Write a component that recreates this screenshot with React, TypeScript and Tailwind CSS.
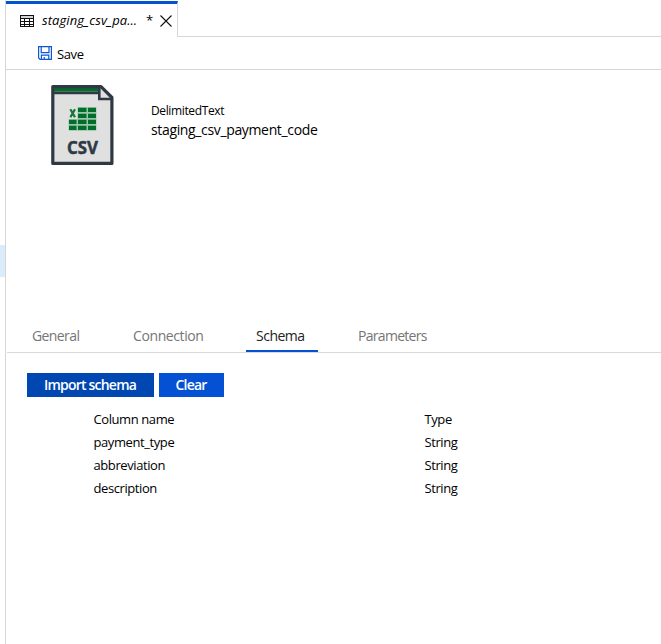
const rows = [
  { name: 'Column name', type: 'Type' },
  { name: 'payment_type', type: 'String' },
  { name: 'abbreviation', type: 'String' },
  { name: 'description', type: 'String' },
];

function TableIcon() {
  return (
    <svg width="14" height="12" viewBox="0 0 14 12" fill="none" stroke="#111111" shapeRendering="crispEdges">
      <path d="M1 1h12v2H1z" fill="#d4d4d4" stroke="none" />
      <path d="M.5 .5h13v11H.5zM0 3.5h14M0 6.5h14M0 9.5h14M4.5 4v8M9.5 4v8" />
    </svg>
  );
}

function SaveIcon() {
  return (
    <svg width="14" height="14" viewBox="0 0 14 14" fill="none" stroke="#0b57d6" strokeWidth="1.2">
      <path d="M.6 .6h12.8v12.8H2l-1.4-1.4zM3.2 .6v6h7.8v-6M3.4 13.4V9.2h7.4v4.2M6.2 11v2.4" />
    </svg>
  );
}

function CsvIcon() {
  return (
    <svg width="64" height="82" viewBox="0 0 64 82" className="block">
      <path d="M2 2H50L61 13V78H2z" fill="#e0e0e0" />
      <path d="M3 2H48V6.5H3z" fill="#036d2c" />
      <path d="M3 6.4H48V9.3H3z" fill="#2f3944" />
      <path d="M48.3 2V14H60" fill="#e0e0e0" stroke="#2f3944" strokeWidth="2.6" />
      <path d="M1.8 1.6H50L60.9 12.5V78.4H1.8z" fill="none" stroke="#2f3944" strokeWidth="3.2" strokeLinejoin="round" />
      <path d="M26.5 22.3H45.5V45.7H17.5V34.2H26.5z" fill="#9bc5a8" />
      <g fill="#036d2c">
        <path d="M27 22.8h8.5v4.2h-8.5zM37 22.8h8v4.2h-8zM27 28.7h8.5v4.2h-8.5zM37 28.7h8v4.2h-8z" />
        <path d="M18 34.8h7.5V39H18zM27 34.8h8.5V39H27zM37 34.8h8V39h-8zM18 40.8h7.5v4.3H18zM27 40.8h8.5v4.3H27zM37 40.8h8v4.3h-8z" />
      </g>
      <path d="M19.4 24.2l4.6 8M24 24.2l-4.6 8" stroke="#187838" strokeWidth="2.3" />
      <text x="31.5" y="69" textAnchor="middle" fontSize="17.2" fontWeight="700" textLength="31" lengthAdjust="spacingAndGlyphs" fill="#2f3944" stroke="#2f3944" strokeWidth=".5" fontFamily="Open Sans">
        CSV
      </text>
    </svg>
  );
}

export default function App() {
  return (
    <div className="flex h-[644px] w-[661px] overflow-hidden bg-white font-['Open_Sans','Noto_Sans',sans-serif] text-[13px] whitespace-nowrap text-black">
      <div className="w-[5px] shrink-0 pt-[245px]">
        <div className="h-8 bg-[#daebfc]" />
      </div>
      <div className="w-px shrink-0 bg-[#d6d6d6]" />
      <main className="flex min-w-0 flex-1 flex-col">
        <div className="flex h-[37px] shrink-0 pt-px">
          <div className="flex w-[172px] items-center border-t-3 border-r border-t-[#0452d3] border-r-[#d6d6d6] pl-[14px]">
            <TableIcon />
            <span className="ml-2 w-[95px] text-[13px] tracking-[0.08px] italic">staging_csv_pa...</span>
            <span className="ml-[9px] w-[7px]">*</span>
            <svg width="12" height="12" viewBox="0 0 12 12" className="ml-[7px] shrink-0" stroke="#111" strokeWidth="1.1">
              <path d="M.5 .5l11 11M11.5 .5l-11 11" />
            </svg>
          </div>
          <div className="flex-1 border-b border-[#d6d6d6]" />
        </div>
        <div className="flex h-[33px] shrink-0 items-center border-b border-[#d6d6d6] pl-8">
          <SaveIcon />
          <span className="ml-[5px] pt-[3px] tracking-[-0.4px]">Save</span>
        </div>
        <section className="flex h-[253px] shrink-0 pt-[15px] pl-[45px]">
          <CsvIcon />
          <div className="pt-[17px] pl-9">
            <div className="h-[18px] text-xs leading-[18px] tracking-[-0.37px]">DelimitedText</div>
            <div className="text-sm leading-5 tracking-[-0.35px]">staging_csv_payment_code</div>
          </div>
        </section>
        <nav className="ml-px flex h-[30px] shrink-0 border-b border-[#d9d9d9] text-sm leading-[26px] text-[#757575]">
          <span className="w-[101px] pl-[25px] tracking-[-0.6px]">General</span>
          <span className="w-[138px] pl-[25px] tracking-[-0.4px]">Connection</span>
          <span className="h-[29px] w-[72px] border-b-2 border-[#0452d3] pl-[10px] tracking-[-0.5px] text-[#222]">Schema</span>
          <span className="pl-[40px] tracking-[-0.7px]">Parameters</span>
        </nav>
        <div className="flex gap-[5px] pt-5 pl-[21px] text-sm leading-6 font-semibold tracking-[-0.78px] text-white">
          <button className="h-6 w-[127px] bg-[#0047b1] pr-px">Import schema</button>
          <button className="h-6 w-[65px] bg-[#0452d3] pr-px">Clear</button>
        </div>
        <div className="grid grid-cols-[331px_auto] pt-[11px] pl-[87.5px] leading-[23px] tracking-[-0.41px]">
          {rows.map((row) => (
            <div key={row.name} className="contents">
              <span>{row.name}</span>
              <span>{row.type}</span>
            </div>
          ))}
        </div>
      </main>
    </div>
  );
}
